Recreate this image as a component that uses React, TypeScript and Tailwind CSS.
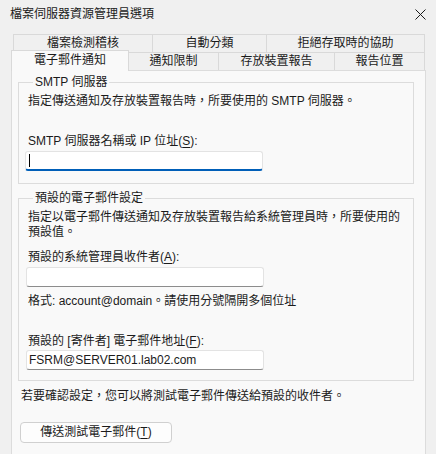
const FONT = "font-['Liberation_Sans','Noto_Sans_CJK_TC',sans-serif]";

const ROW1 = [
  { label: "檔案檢測稽核", w: "w-[139px]" },
  { label: "自動分類", w: "w-[114px]" },
  { label: "拒絕存取時的協助", w: "w-[159px] border-r" },
];

const ROW2 = [
  { label: "通知限制", w: "w-[90px]" },
  { label: "存放裝置報告", w: "w-[116px]" },
  { label: "報告位置", w: "w-[90px]" },
];

// access key letter, underlined like a Win32 label
function Key({ k }: { k: string }) {
  return (
    <>
      (<span className="underline underline-offset-2">{k}</span>)
    </>
  );
}

function Field({ value, focused }: { value?: string; focused?: boolean }) {
  return (
    <div
      className={`h-[20px] w-[238px] flex items-center rounded-[3px] border bg-white px-[2px] ${
        focused
          ? "border-[#e3e3e3] border-b-2 border-b-[#005fb8]"
          : "border-[#e3e3e3] border-b-[#8c8c8c]"
      }`}
    >
      {focused && <span className="ml-[1px] h-[13px] w-px bg-black" />}
      {value && <span className="leading-[15px]">{value}</span>}
    </div>
  );
}

function Group({ title, children, className }: { title: string; children: React.ReactNode; className?: string }) {
  return (
    <fieldset className={`ml-[6px] w-[396px] border border-[#dcdcdc] px-[7px] ${className ?? ""}`}>
      <legend className="ml-[7px] px-[2px] leading-[15px]">{title}</legend>
      {children}
    </fieldset>
  );
}

export default function App() {
  return (
    <div className={`${FONT} text-[12px] text-[#1b1b1b] w-[436px] h-[454px] bg-[#f0f0f0] overflow-hidden flex flex-col`}>
      {/* title bar */}
      <div className="h-[28px] shrink-0 flex items-center justify-between pl-[10px] pr-[8px]">
        <span className="leading-[15px]">檔案伺服器資源管理員選項</span>
        <svg width="11" height="11" viewBox="0 0 11 11" className="mr-[2px]">
          <path d="M0.5 0.5 L10.5 10.5 M10.5 0.5 L0.5 10.5" stroke="#1b1b1b" strokeWidth="1" />
        </svg>
      </div>

      {/* tabs, two rows */}
      <div className="mt-[6px] ml-[13px] flex h-[18px] shrink-0">
        {ROW1.map((t) => (
          <div
            key={t.label}
            className={`${t.w} h-full flex items-center justify-center border-t border-l border-[#d9d9d9] leading-[15px]`}
          >
            {t.label}
          </div>
        ))}
      </div>
      <div className="ml-[11px] flex items-end h-[18px] shrink-0">
        <div className="relative z-10 -mb-px h-[21px] w-[118px] flex items-center justify-center border-x border-t border-[#d9d9d9] bg-[#f9f9f9] pb-[2px] leading-[15px]">
          電子郵件通知
        </div>
        {ROW2.map((t) => (
          <div
            key={t.label}
            className={`${t.w} h-full flex items-center justify-center border-t border-r border-[#d9d9d9] leading-[15px]`}
          >
            {t.label}
          </div>
        ))}
      </div>

      {/* page */}
      <div className="ml-[11px] w-[415px] flex-1 border-x border-t border-[#dcdcdc] bg-[#f9f9f9] flex flex-col">
        <Group title="SMTP 伺服器" className="mt-[4px] pb-[12px]">
          <p className="mt-[4px] pl-[2px] leading-[15px]">
            指定傳送通知及存放裝置報告時，所要使用的 SMTP 伺服器。
          </p>
          <p className="mt-[25px] pl-[2px] leading-[15px]">
            SMTP 伺服器名稱或 IP 位址<Key k="S" />:
          </p>
          <div className="mt-[2px] -ml-px">
            <Field focused />
          </div>
        </Group>

        <Group title="預設的電子郵件設定" className="mt-[7px] pb-[10px]">
          <p className="mt-[4px] pl-[2px] leading-[15px]">
            指定以電子郵件傳送通知及存放裝置報告給系統管理員時，所要使用的
            <br />
            預設值。
          </p>
          <p className="mt-[10px] pl-[2px] leading-[15px]">
            預設的系統管理員收件者<Key k="A" />:
          </p>
          <div className="mt-[2px]">
            <Field />
          </div>
          <p className="mt-[7px] pl-[2px] leading-[15px]">格式: account@domain。請使用分號隔開多個位址</p>
          <p className="mt-[25px] pl-[2px] leading-[15px]">
            預設的 [寄件者] 電子郵件地址<Key k="F" />:
          </p>
          <div className="mt-[1px]">
            <Field value="FSRM@SERVER01.lab02.com" />
          </div>
        </Group>

        <p className="mt-[8px] ml-[9px] leading-[15px]">若要確認設定，您可以將測試電子郵件傳送給預設的收件者。</p>

        <button className="mt-[18px] ml-[8px] h-[21px] w-[152px] rounded-[4px] border border-[#d0d0d0] bg-[#fdfdfd] leading-[15px] flex items-center justify-center">
          傳送測試電子郵件<Key k="T" />
        </button>
      </div>
    </div>
  );
}
